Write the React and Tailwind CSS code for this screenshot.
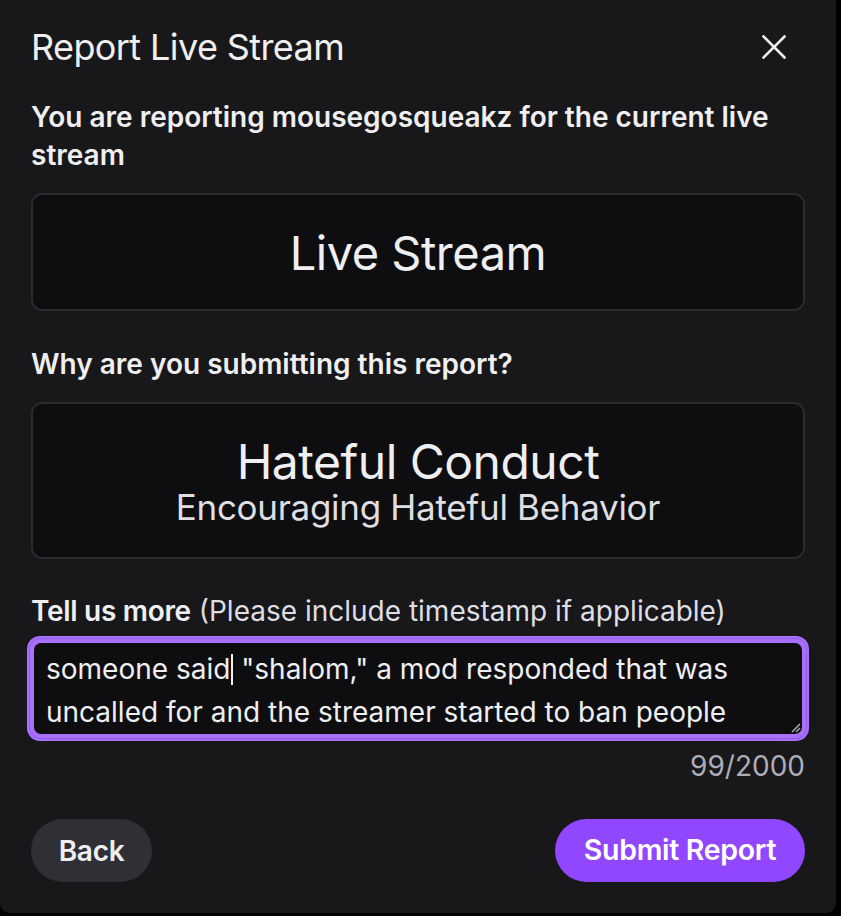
import React from "react";

export default function App() {
  const font = { fontFamily: "Inter, 'Noto Sans', sans-serif" };
  return (
    <div className="w-[841px] h-[916px] bg-black" style={font}>
      <div className="w-[836px] h-[913px] bg-[#18181b] rounded-b-[10px] px-[31px] text-[#efeff1] flex flex-col">
        <div className="flex items-center justify-between mt-[27px] h-[40px]">
          <h1 className="text-[36px] leading-[40px] font-normal tracking-[-0.6px]">Report Live Stream</h1>
          <svg width="24" height="24" viewBox="0 0 24 24" className="mr-[19px]">
            <path d="M1.5 1.5 L22.5 22.5 M22.5 1.5 L1.5 22.5" stroke="#efeff1" strokeWidth="2.6" strokeLinecap="square" />
          </svg>
        </div>
        <p className="mt-[31px] text-[28px] leading-[38px] font-semibold">
          You are reporting mousegosqueakz for the current live stream
        </p>
        <div className="mt-[19px] h-[118px] rounded-[11px] border-2 border-[#2a2a2f] bg-[#0e0e10] flex items-center justify-center">
          <span className="text-[47px] leading-none tracking-[-0.5px]">Live Stream</span>
        </div>
        <p className="mt-[34px] text-[28px] leading-[38px] font-semibold">
          Why are you submitting this report?
        </p>
        <div className="mt-[19px] h-[157px] rounded-[11px] border-2 border-[#2a2a2f] bg-[#0e0e10] flex flex-col items-center justify-center">
          <span className="text-[48px] leading-[52px] tracking-[-0.5px]">Hateful Conduct</span>
          <span className="text-[35px] leading-[38px] text-[#dedee3] tracking-[-0.3px]">Encouraging Hateful Behavior</span>
        </div>
        <p className="mt-[33px] text-[28px] leading-[38px]">
          <span className="font-semibold tracking-[-0.3px]">Tell us more</span>{" "}
          <span className="text-[#dedee3]">(Please include timestamp if applicable)</span>
        </p>
        <div className="mt-[6px] -mx-[4px] rounded-[13px] bg-[#a970ff] p-[2px]">
          <div className="rounded-[11px] border border-[#8f5fe3] p-[4px]">
            <div className="rounded-[7px] bg-[#0e0e10] h-[91px] pl-[12px] pr-[8px] pt-[5px] text-[28px] leading-[43px] relative whitespace-nowrap">
              <div className="flex items-center">
                <span>someone said</span>
                <span className="w-[2px] h-[31px] bg-[#efeff1] ml-[1px] shrink-0"></span>
                <span>&nbsp;"shalom," a mod responded that was</span>
              </div>
              <div>uncalled for and the streamer started to ban people</div>
              <svg width="12" height="12" viewBox="0 0 12 12" className="absolute right-[1px] bottom-[1px]">
                <path d="M11 3 L3 11 M11 7 L7 11" stroke="#a9a9b2" strokeWidth="1.5" />
              </svg>
            </div>
          </div>
        </div>
        <div className="mt-[9px] text-right text-[28px] leading-[32px] text-[#adadb8]">99/2000</div>
        <div className="mt-[37px] flex items-center justify-between">
          <button className="h-[63px] w-[121px] rounded-full bg-[#2f2f35] text-[28px] font-semibold tracking-[-0.3px]">Back</button>
          <button className="h-[63px] w-[250px] rounded-full bg-[#9147ff] text-[28.5px] font-semibold text-white tracking-[-0.3px]">Submit Report</button>
        </div>
      </div>
    </div>
  );
}
